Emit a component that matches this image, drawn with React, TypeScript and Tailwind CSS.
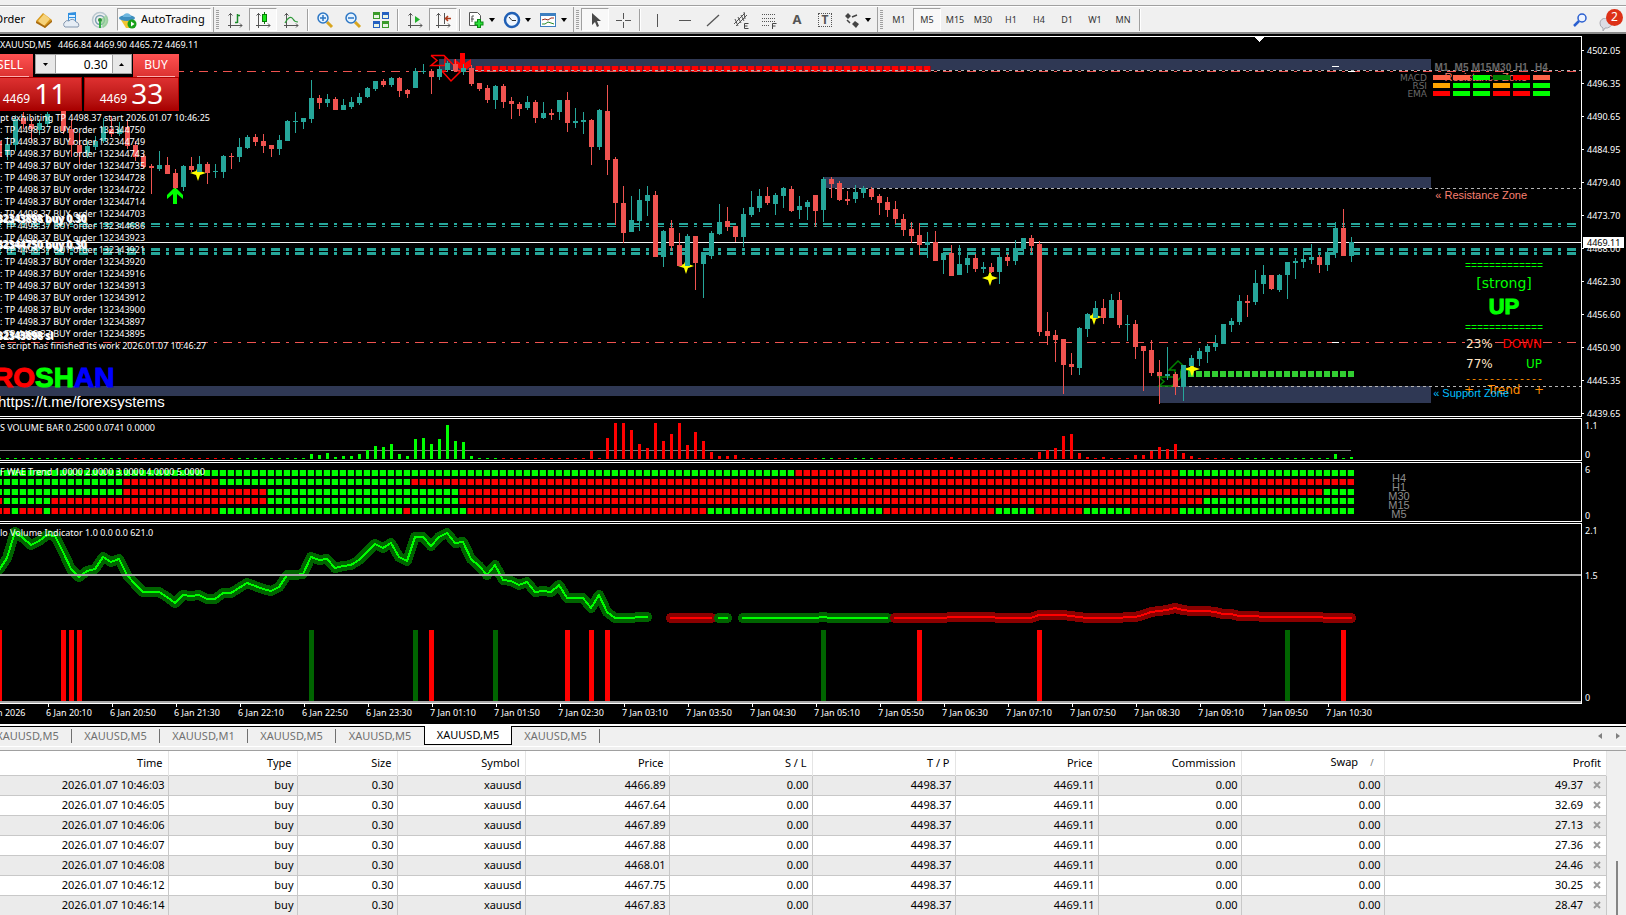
import React, { useState } from "react";

const UP = "#26a69a";
const DOWN = "#ef5350";

// one bar every 8px: colour, high, body top, body bottom, low
const CANDLES = `
r 139 141 157 160,g 137 144 155 160,g 115 119 145 151,r 112 118 124 129,r 118 124 129 141,g 119 123 130 135,
g 112 114 124 127,r 95 100 108 111,r 100 110 131 134,r 120 129 145 157,r 133 145 153 164,g 141 146 153 158,
g 136 141 147 150,g 118 127 141 143,r 116 129 134 137,g 122 129 134 136,r 121 127 146 149,r 141 145 157 161,
r 154 156 167 168,r 164 166 168 194,g 151 165 169 171,r 157 165 174 174,r 169 173 188 189,g 165 166 187 191,
r 157 166 170 172,g 156 164 172 172,r 162 164 173 184,g 164 171 172 178,g 155 156 172 178,r 153 156 157 169,
g 138 147 157 162,g 135 137 148 149,r 134 137 142 146,r 134 141 146 153,r 145 145 149 157,g 135 140 149 155,
g 120 121 141 141,g 112 121 122 133,g 118 118 122 129,g 80 98 119 123,r 95 98 103 109,g 94 99 103 107,
r 97 99 110 110,g 99 105 110 110,g 97 102 107 109,g 93 97 103 105,g 87 88 97 98,g 81 81 89 91,
r 79 81 85 87,g 77 78 85 87,r 77 78 91 97,r 89 90 94 98,g 68 71 88 88,g 64 71 72 74,
r 69 71 77 94,g 66 69 77 80,g 61 63 70 72,r 59 64 71 72,g 64 68 72 75,r 65 68 84 86,
r 83 83 89 91,r 85 88 100 103,g 85 86 100 109,r 84 86 102 108,r 97 101 104 119,r 102 104 109 116,
g 96 102 108 110,r 100 102 118 123,g 102 113 118 119,r 109 113 115 120,g 100 100 112 120,r 92 100 123 132,
g 108 121 123 128,g 112 120 122 134,r 119 120 147 165,g 109 110 147 150,r 85 111 160 175,r 157 159 203 225,
r 186 203 233 243,g 196 220 232 232,g 189 200 221 231,g 186 195 201 216,r 191 195 257 257,g 230 231 257 267,
r 220 228 246 251,r 233 245 266 266,g 234 236 266 266,r 236 236 263 290,g 252 252 264 298,g 231 233 256 259,
g 204 222 234 235,r 207 221 227 231,r 226 226 237 242,g 208 214 237 247,g 191 207 215 217,g 189 196 208 212,
r 187 196 203 205,g 193 195 204 215,g 187 188 196 208,r 186 189 211 212,g 196 206 210 219,g 200 202 207 220,
r 195 195 211 227,g 177 179 210 222,r 177 179 184 198,r 181 183 200 201,r 191 199 201 205,g 185 192 199 203,
g 186 188 193 198,r 187 189 197 200,r 194 196 203 215,r 197 202 210 217,r 201 209 219 224,r 214 219 230 236,
r 222 229 236 243,r 223 235 245 255,g 232 242 245 258,r 231 242 261 261,g 253 253 260 274,r 245 253 276 276,
g 245 264 275 275,g 254 258 265 273,r 254 258 269 272,g 262 267 269 273,r 263 267 272 273,g 255 257 272 284,
r 254 257 261 266,g 240 248 261 265,g 238 238 249 254,r 235 238 246 253,r 241 244 332 336,r 312 331 336 345,
r 330 335 340 362,r 339 339 365 394,r 353 364 367 375,g 327 328 368 375,g 313 314 329 337,g 301 308 318 318,
r 299 308 318 324,g 294 300 318 318,r 292 300 325 328,g 315 324 325 341,r 320 324 347 359,r 346 346 351 391,
r 340 350 373 376,r 360 372 376 404,g 347 374 376 380,r 372 374 387 395,g 365 365 387 401,g 355 358 366 366,
g 348 351 359 366,g 344 346 352 363,g 335 343 347 351,g 324 324 344 344,g 318 321 325 332,g 295 301 322 325,
r 295 301 303 317,g 270 283 302 305,g 265 275 284 294,r 275 275 289 290,g 274 275 290 292,g 262 262 275 299,
g 258 261 263 279,g 250 259 262 268,g 244 257 260 264,r 255 257 265 273,g 248 252 265 271,g 222 228 253 258,
r 209 228 256 256,g 237 242 256 262`
  .split(",")
  .map((c) => c.trim().split(" "));

const LAST = 168;
const barX = (k: number) => 8 * k + 7;
const range = (from: number, to: number) =>
  Array.from({ length: to - from + 1 }, (_, i) => from + i);

const STARS = [
  [198, 173],
  [686, 266],
  [990, 278],
  [1094, 317],
  [1192, 369],
];

// tall volume bars, everything else is a 1px stub
const VOLUME: Record<number, number> = {
  38: 5, 39: 4, 40: 6, 41: 2, 42: 3, 43: 3, 44: 5, 45: 9, 46: 13, 47: 12, 48: 15, 49: 5, 50: 3,
  51: 20, 52: 21, 53: 15, 54: 20, 55: 34, 56: 18, 57: 17, 58: 3, 73: 8, 75: 21, 76: 36, 77: 36,
  78: 29, 79: 15, 80: 11, 81: 36, 82: 18, 83: 25, 84: 36, 85: 14, 86: 27, 87: 18, 88: 7, 89: 3,
  90: 3, 91: 4, 118: 2, 129: 7, 130: 9, 131: 11, 132: 23, 133: 25, 134: 6, 135: 2, 137: 2, 141: 4,
  142: 4, 143: 8, 144: 12, 145: 10, 146: 15, 147: 6, 148: 3, 166: 5, 168: 2,
};

// bar index at which the colour flips
const VOLUME_FLIPS = [9, 10, 15, 29, 62, 102, 104, 106, 109, 154];

const TREND_ROWS = [
  { y: 470, start: "g", flips: [99, 147] },
  { y: 479, start: "g", flips: [15, 27, 51] },
  { y: 489, start: "g", flips: [15, 33, 57, 165] },
  { y: 498, start: "r", flips: [0, 6, 33, 57, 150] },
  { y: 508, start: "r", flips: [1, 2, 5, 6, 27, 50, 51, 58, 88, 110, 124, 129, 135, 141, 147] },
];

const isGreen = (k: number, start: string, flips: number[]) =>
  (start === "g") === (flips.filter((f) => f <= k).length % 2 === 0);

const WAVES = [
  {
    green: true,
    from: -1,
    ys: [
      570, 558, 532, 538, 545, 541, 535, 536, 552, 569, 577, 571, 569, 557, 562, 559, 575, 584, 592,
      592, 592, 597, 603, 595, 596, 595, 599, 599, 593, 593, 588, 583, 586, 589, 591, 587, 575, 575,
      574, 557, 560, 559, 568, 566, 565, 560, 552, 544, 548, 543, 557, 561, 537, 537, 546, 537, 533,
      543, 542, 559, 566, 575, 565, 580, 581, 585, 582, 592, 591, 592, 585, 598, 598, 598, 608, 595,
      612, 618, 618, 618, 617, 617,
    ],
  },
  { green: false, from: 83, ys: [618, 618, 618, 618, 618, 618] },
  { green: true, from: 89, ys: [618, 618] },
  {
    green: true,
    from: 92,
    ys: [618, 618, 618, 618, 618, 618, 618, 618, 618, 618, 617, 618, 618, 618, 618, 618, 618, 618, 618],
  },
  {
    green: false,
    from: 111,
    ys: [
      618, 618, 618, 618, 618, 618, 618, 617, 617, 617, 617, 617, 617, 618, 618, 618, 618, 618, 615,
      615, 615, 615, 616, 617, 618, 618, 618, 618, 618, 617, 617, 615, 612, 611, 610, 608, 610, 611,
      611, 611, 612, 614, 614, 616, 616, 616, 617, 617, 617, 617, 617, 617, 617, 617, 618, 618, 618,
      618,
    ],
  },
];

const SIGNALS = [
  { color: "#ff0000", bars: [-1, 7, 8, 9, 53, 70, 73, 75, 114, 129, 167] },
  { color: "#006400", bars: [38, 51, 61, 102, 160] },
];

const PRICES = [
  "4502.05", "4496.35", "4490.65", "4484.95", "4479.40", "4473.70",
  "4468.00", "4462.30", "4456.60", "4450.90", "4445.35", "4439.65",
];

const TIMES = [
  "6 Jan 2026", "6 Jan 20:10", "6 Jan 20:50", "6 Jan 21:30", "6 Jan 22:10", "6 Jan 22:50",
  "6 Jan 23:30", "7 Jan 01:10", "7 Jan 01:50", "7 Jan 02:30", "7 Jan 03:10", "7 Jan 03:50",
  "7 Jan 04:30", "7 Jan 05:10", "7 Jan 05:50", "7 Jan 06:30", "7 Jan 07:10", "7 Jan 07:50",
  "7 Jan 08:30", "7 Jan 09:10", "7 Jan 09:50", "7 Jan 10:30",
];

const MODIFIED = [
  132344750, 132344749, 132344743, 132344735, 132344728, 132344722, 132344714, 132344703, 132344686,
  132343923, 132343921, 132343920, 132343916, 132343913, 132343912, 132343900, 132343897, 132343895,
];

const FRAMES = ["M1", "M5", "M15", "M30", "H1", "H4"];
const SIGNAL_GRID = [
  ["bg-[#ff6347]", "bg-[#ff6347]", "bg-[#00ff00]", "bg-[#008000]", "bg-[#ff0000]", "bg-[#ff6347]"],
  ["bg-[#ffa500]", "bg-[#00ff00]", "bg-[#00ff00]", "bg-[#ffa500]", "bg-[#00ff00]", "bg-[#00ff00]"],
  ["bg-[#ff0000]", "bg-[#00ff00]", "bg-[#00ff00]", "bg-[#ff0000]", "bg-[#ff0000]", "bg-[#00ff00]"],
];

const TABS = ["XAUUSD,M5", "XAUUSD,M5", "XAUUSD,M1", "XAUUSD,M5", "XAUUSD,M5", "XAUUSD,M5", "XAUUSD,M5"];

const ORDERS = [
  ["03", "4466.89", "49.37"],
  ["05", "4467.64", "32.69"],
  ["06", "4467.89", "27.13"],
  ["07", "4467.88", "27.36"],
  ["08", "4468.01", "24.46"],
  ["12", "4467.75", "30.25"],
  ["14", "4467.83", "28.47"],
];

const Icon = ({ children }: { children: React.ReactNode }) => (
  <svg width="18" height="18" viewBox="0 0 18 18" fill="none">
    {children}
  </svg>
);

const Axes = () => (
  <path d="M4.5 2v15M2 14.5h14M2.5 4.5l2-2 2 2M14 12.5l2 2-2 2" stroke="#555" />
);

const icons = {
  book: (
    <Icon>
      <path d="M1 10L8 2l9 7-7 8z" fill="#d99a1c" />
      <path d="M3 10l6-7 6 5-6 7z" fill="#f6d27a" />
      <path d="M1 10l9 5 7-6v2l-7 6-9-5z" fill="#a86a10" />
    </Icon>
  ),
  market: (
    <Icon>
      <path d="M5 2l8-1v10H5z" fill="#2f8fe0" />
      <path d="M6 4h6v2H6zM6 7h6v2H6z" fill="#d9efff" />
      <path d="M2 16a3 3 0 010-5 3 3 0 014-1 4 4 0 017 1 3 3 0 012 5z" fill="#e6edf5" stroke="#8496ad" />
    </Icon>
  ),
  signal: (
    <Icon>
      <circle cx="9" cy="9" r="7.5" stroke="#b9c7cf" strokeWidth="1.5" />
      <circle cx="9" cy="9" r="4.5" stroke="#7fa3b5" strokeWidth="1.5" />
      <path d="M9 9l6-5a8 8 0 01-3 13z" fill="#8fd08f" opacity=".7" />
      <circle cx="9" cy="9" r="2" fill="#2b8f3a" />
      <path d="M9 10v7" stroke="#2fae3f" strokeWidth="2" />
    </Icon>
  ),
  auto: (
    <Icon>
      <path d="M2 9h12l-4 8H7z" fill="#f3c530" />
      <ellipse cx="8" cy="7" rx="8" ry="3" fill="#3f8fc0" />
      <path d="M4 6c0-5 8-5 8 0z" fill="#6db6df" />
      <circle cx="13" cy="13" r="4.5" fill="#18a018" />
      <path d="M12 10.500v5l3.500-2.500z" fill="#fff" />
    </Icon>
  ),
  bars: (
    <Icon>
      <Axes />
      <path d="M11.500 3v9M9 11.500h2.500M11.500 4.500H14" stroke="#1a8a2a" strokeWidth="1.500" />
    </Icon>
  ),
  candles: (
    <Icon>
      <Axes />
      <path d="M10.500 1v12" stroke="#0a7a0a" />
      <rect x="8.500" y="3.500" width="4" height="7" fill="#19e619" stroke="#0a7a0a" />
    </Icon>
  ),
  line: (
    <Icon>
      <Axes />
      <path d="M3 12c3-6 6-7 8-4 1 2 3 3 5 3" stroke="#2f9a3a" strokeWidth="1.200" />
    </Icon>
  ),
  zoomIn: (
    <Icon>
      <path d="M11 11l5 5" stroke="#d8a520" strokeWidth="3" />
      <circle cx="7" cy="7" r="5" fill="#e3f2ff" stroke="#2c76c4" strokeWidth="1.500" />
      <path d="M4 7h6M7 4v6" stroke="#2c76c4" strokeWidth="1.500" />
    </Icon>
  ),
  zoomOut: (
    <Icon>
      <path d="M11 11l5 5" stroke="#d8a520" strokeWidth="3" />
      <circle cx="7" cy="7" r="5" fill="#e3f2ff" stroke="#2c76c4" strokeWidth="1.500" />
      <path d="M4 7h6" stroke="#2c76c4" strokeWidth="1.500" />
    </Icon>
  ),
  tile: (
    <Icon>
      <path d="M1 1h7v7H1zM10 10h7v7h-7z" fill="#3a9a2a" />
      <path d="M10 1h7v7h-7zM1 10h7v7H1z" fill="#2460c0" />
      <path d="M2 4h5v3H2zM11 4h5v3h-5zM2 13h5v3H2zM11 13h5v3h-5z" fill="#e8f4e4" />
    </Icon>
  ),
  scroll: (
    <Icon>
      <Axes />
      <path d="M9 5v7l5-3.500z" fill="#22b02c" />
    </Icon>
  ),
  shift: (
    <Icon>
      <Axes />
      <path d="M10.500 2v11" stroke="#555" />
      <path d="M17 7.500h-5M14 5l-2.500 2.500L14 10" stroke="#b03a1a" strokeWidth="1.500" />
    </Icon>
  ),
  indicator: (
    <Icon>
      <path d="M2.500 1.500h8l3 3v10h-11z" fill="#fff" stroke="#555" />
      <path d="M5 11V5h2M4 8h3" stroke="#555" />
      <path d="M12 8v9M7.500 12.500h9" stroke="#0a8a12" strokeWidth="4" />
      <path d="M12 9v7M8.500 12.500h7" stroke="#2be03a" strokeWidth="2" />
    </Icon>
  ),
  clock: (
    <Icon>
      <circle cx="9" cy="9" r="7" fill="#eef6ff" stroke="#1f5fb5" strokeWidth="2.500" />
      <path d="M6 6l3 3.500h4" stroke="#333" />
    </Icon>
  ),
  template: (
    <Icon>
      <rect x="1.500" y="2.500" width="15" height="13" fill="#fff" stroke="#3d7fc0" />
      <path d="M1 2h16v3H1z" fill="#3d7fc0" />
      <path d="M3 9l3-1 3 1 3-2h3" stroke="#9a2a1a" />
      <path d="M3 13h3l3-2 3 1 3 1" stroke="#2a8a2a" />
    </Icon>
  ),
  cursor: (
    <Icon>
      <path d="M6 2v12l3-3 2 5 2-1-2-5h4z" fill="#4a4a4a" />
    </Icon>
  ),
  cross: (
    <Icon>
      <path d="M9.500 2v6M9.500 11v6M2 9.500h6M11 9.500h6" stroke="#555" />
    </Icon>
  ),
  vline: (
    <Icon>
      <path d="M9.500 3v13" stroke="#555" />
    </Icon>
  ),
  hline: (
    <Icon>
      <path d="M3 9.500h12" stroke="#555" />
    </Icon>
  ),
  trend: (
    <Icon>
      <path d="M3 15L15 4" stroke="#555" strokeWidth="1.300" />
    </Icon>
  ),
  channel: (
    <Icon>
      <path d="M2 13L13 2M4 15L15 4M3 8l3 7M6 6l3 6M9 4l3 6M12 1l1 7" stroke="#555" />
      <path d="M16.500 12.500h-4v5h4M12.500 15h3" stroke="#444" />
    </Icon>
  ),
  fibo: (
    <Icon>
      <path d="M2 3.500h13M2 7.500h13M2 10.500h13M2 14.500h8" stroke="#555" strokeDasharray="1 1" />
      <path d="M16.500 12.500h-4V18M12.500 15h3" stroke="#444" />
    </Icon>
  ),
  shapes: (
    <Icon>
      <path d="M2 5l3-3 3 3-3 3zM9 13l3-3 4 3-3 4z" fill="#444" />
      <path d="M4 9l3 3M9 6l5-2" stroke="#444" strokeWidth="1.500" />
    </Icon>
  ),
};

const Tool = ({ label, pressed, menu, children }: any) => (
  <button
    aria-label={label}
    className={`flex h-[23px] shrink-0 items-center ${menu ? "w-[36px] gap-1 pl-1" : "w-[28px] justify-center"} ${
      pressed ? "border border-t-[#a0a0a0] border-l-[#a0a0a0] border-r-white border-b-white bg-[#f8f8f8]" : ""
    }`}
  >
    {children}
    {menu && (
      <svg width="6" height="4" className="shrink-0">
        <path d="M0 0h6L3 4z" fill="#000" />
      </svg>
    )}
  </button>
);

const Divider = () => <span className="mx-[2px] h-[22px] w-[2px] shrink-0 border-l border-[#a0a0a0] bg-white" />;

const Grip = () => (
  <span className="flex w-[10px] shrink-0 items-center gap-[2px] pl-[2px]">
    <span className="h-[25px] w-px bg-[#a0a0a0]" />
    <svg width="3" height="20">
      <path d="M1.500 0v20" stroke="#a0a0a0" strokeWidth="3" strokeDasharray="1 1" />
    </svg>
  </span>
);

const Toolbar = ({ frame, setFrame }: { frame: string; setFrame: (f: string) => void }) => (
  <header className="h-[34px] bg-[#f0f0f0] text-[11px] text-black">
    <div className="h-[6px] border-b border-[#a0a0a0]" />
    <div className="flex h-[28px] items-center border-t border-b-2 border-t-white border-b-[#8a8a8a]">
      <button className="flex w-[30px] shrink-0 justify-end pr-[5px] whitespace-nowrap">New Order</button>
      <Tool label="Market watch">{icons.book}</Tool>
      <Tool label="Market">{icons.market}</Tool>
      <Tool label="Signals">{icons.signal}</Tool>
      <button className="ml-[3px] flex h-[23px] w-[94px] shrink-0 items-center gap-1 border border-t-[#a0a0a0] border-r-white border-b-white border-l-[#a0a0a0] bg-[#f8f8f8] pl-px">
        {icons.auto}
        AutoTrading
      </button>
      <Grip />
      <Tool label="Bar chart">{icons.bars}</Tool>
      <Tool label="Candlesticks" pressed>{icons.candles}</Tool>
      <Tool label="Line chart">{icons.line}</Tool>
      <Divider />
      <Tool label="Zoom in">{icons.zoomIn}</Tool>
      <Tool label="Zoom out">{icons.zoomOut}</Tool>
      <Tool label="Tile windows">{icons.tile}</Tool>
      <Divider />
      <Tool label="Auto scroll">{icons.scroll}</Tool>
      <Tool label="Chart shift" pressed>{icons.shift}</Tool>
      <Divider />
      <Tool label="Indicators" menu>{icons.indicator}</Tool>
      <Tool label="Periods" menu>{icons.clock}</Tool>
      <Tool label="Templates" menu>{icons.template}</Tool>
      <Grip />
      <Tool label="Cursor" pressed>{icons.cursor}</Tool>
      <Tool label="Crosshair">{icons.cross}</Tool>
      <Divider />
      <Tool label="Vertical line">{icons.vline}</Tool>
      <Tool label="Horizontal line">{icons.hline}</Tool>
      <Tool label="Trendline">{icons.trend}</Tool>
      <Tool label="Channel">{icons.channel}</Tool>
      <Tool label="Fibonacci">{icons.fibo}</Tool>
      <Tool label="Text">
        <span className="text-[13px] font-bold text-[#555]">A</span>
      </Tool>
      <Tool label="Text label">
        <span className="flex h-[14px] w-[14px] items-center justify-center border border-dotted border-[#555] text-[12px] font-bold text-[#555]">
          T
        </span>
      </Tool>
      <Tool label="Arrows" menu>{icons.shapes}</Tool>
      <Grip />
      {["M1", "M5", "M15", "M30", "H1", "H4", "D1", "W1", "MN"].map((f) => (
        <button
          key={f}
          onClick={() => setFrame(f)}
          className={`h-[23px] w-[28px] shrink-0 text-[9px] text-[#333] ${
            f === frame ? "border border-t-[#a0a0a0] border-r-white border-b-white border-l-[#a0a0a0] bg-[#f8f8f8]" : ""
          }`}
        >
          {f}
        </button>
      ))}
      <Divider />
      <div className="ml-auto flex items-center gap-3 pr-[3px]">
        <button aria-label="Search">
          <svg width="14" height="14" fill="none">
            <path d="M6 8l-5 5" stroke="#2a5fd0" strokeWidth="2.500" />
            <circle cx="9" cy="5" r="4" fill="#eef4ff" stroke="#2a5fd0" strokeWidth="1.500" />
          </svg>
        </button>
        <button aria-label="Notifications" className="relative h-[22px] w-[24px]">
          <svg width="16" height="14" className="mt-[9px]">
            <path d="M1 5a6 5 0 0112 0 6 5 0 01-7 5l-2 3v-3a5 5 0 01-3-5z" fill="#dcdce4" stroke="#a8a8b0" />
          </svg>
          <span className="absolute top-0 right-0 flex h-[17px] w-[17px] items-center justify-center rounded-full bg-[#dd3118] text-[12px] text-white">
            2
          </span>
        </button>
      </div>
    </div>
  </header>
);

const Pane = ({ size, axis, children }: { size: string; axis: React.ReactNode; children: React.ReactNode }) => (
  <section className={`flex ${size}`}>
    <div className="relative min-w-0 flex-1 overflow-hidden border-y border-r border-[#ffffff]">{children}</div>
    {axis}
  </section>
);

const Plot = ({ top, children }: { top: string; children: React.ReactNode }) => (
  <svg className="block h-full w-full" shapeRendering="crispEdges">
    <g transform={top}>{children}</g>
  </svg>
);

const PriceChart = () => (
  <Plot top="translate(0 -37)">
    <g fill="#2f3854">
      <rect x="439" y="59" width="992" height="11" />
      <rect x="823" y="177" width="608" height="11" />
      <rect x="0" y="386" width="1160" height="10" />
      <rect x="1160" y="386" width="271" height="17" />
    </g>
    <g stroke={UP} strokeDasharray="9 6 3 6">
      <line x1="-17" x2="1576" y1="224" y2="224" strokeWidth="2" />
      <line x1="-17" x2="1576" y1="226.500" y2="226.500" />
      <line x1="-17" x2="1576" y1="249.500" y2="249.500" strokeWidth="3" />
      <line x1="-17" x2="1576" y1="253.500" y2="253.500" strokeWidth="3" />
    </g>
    {range(59, 115).map((k) => (
      <g key={k}>
        <rect x={barX(k) - 4} y="66" width="8" height="6" fill="#8b1020" />
        <rect x={barX(k) - 3} y="66" width="6" height="6" fill="#ff0000" />
      </g>
    ))}
    {range(147, LAST).map((k) => (
      <rect key={k} x={barX(k) - 3} y="371" width="6" height="6" fill="#32cd32" />
    ))}
    <g stroke={DOWN} strokeDasharray="9 6 3 6">
      <line x1="-17" x2="1576" y1="71.500" y2="71.500" />
      <line x1="-17" x2="1576" y1="342.500" y2="342.500" />
    </g>
    <g stroke="#b4b4b4" strokeDasharray="3 3">
      <line x1="451" x2="100%" y1="70.500" y2="70.500" />
      <line x1="829" x2="100%" y1="188.500" y2="188.500" />
      <line x1="1159" x2="100%" y1="386.500" y2="386.500" />
    </g>
    <line x1="0" x2="100%" y1="242.500" y2="242.500" stroke="#f4f4f4" />
    <g stroke="#fff">
      <line x1="1332" x2="1339" y1="66.500" y2="66.500" />
      <line x1="1348" x2="1355" y1="71.500" y2="71.500" />
      <line x1="1332" x2="1339" y1="342.500" y2="342.500" />
    </g>
    <path d="M1254 37h10l-5 5z" fill="#fff" />
    <g fill="none" strokeWidth="1.500" shapeRendering="auto">
      <path
        d="M431 55.500h13l11 11M431 55.500l6 5-6 5h14v-8M442 71l9 10 10-10h-4M442 71h4"
        stroke="#ff0000"
      />
      <path
        d="M1178 361l-9 9h6v7h-16l5 4.500-5 4.500h13l9-9v-7h7z"
        stroke="#008000"
      />
    </g>
    <path d="M460 53h5v10l6-4v7l-8 6-9-8v-5l6 4z" fill="#ff0000" shapeRendering="auto" />
    <path d="M175 187l8 8v4l-6-5v10h-4v-10l-6 5v-4z" fill="#00ff00" shapeRendering="auto" />
    {STARS.map(([x, y]) => (
      <path
        key={x}
        transform={`translate(${x} ${y})`}
        d="M0-7l2 5 6 2-6 2-2 6-2-6-6-2 6-2z"
        fill="#ffff00"
        shapeRendering="auto"
      />
    ))}
    {CANDLES.map(([side, high, top, bottom, low], i) => {
      const x = barX(i - 1);
      return (
        <g key={i} fill={side === "g" ? UP : DOWN}>
          <rect x={x} y={+high} width="1" height={+low - +high} />
          <rect x={x - 2} y={+top} width="5" height={+bottom - +top} />
        </g>
      );
    })}
  </Plot>
);

const QuoteButton = ({ big }: { big: string }) => (
  <button className="flex h-[34px] w-[95px] items-end justify-center gap-1 border border-[#b00000] bg-linear-to-b from-[#de3030] to-[#a80000] pb-[4px] text-[12px] leading-[14px] text-white">
    4469
    <span className="text-[28px] leading-[26px]">{big}</span>
  </button>
);

const OneClick = () => (
  <div className="absolute top-[17px] left-0 -ml-[13px] w-[192px] bg-black text-[12px] text-white">
    <div className="flex justify-between">
      <button className="h-[23px] w-[46px] bg-linear-to-b from-[#ff5252] to-[#dc3030] px-[4px]">
        <span className="block h-[22px] border-b border-[#ffb0b0] leading-[20px]">SELL</span>
      </button>
      <div className="flex h-[20px] w-[97px] border border-[#a0a0a0] bg-[#e8e8e8]">
        <button aria-label="Decrease volume" className="flex w-[19px] items-center justify-center">
          <svg width="5" height="3"><path d="M0 0h5L2.500 3z" /></svg>
        </button>
        <input
          aria-label="Volume"
          defaultValue="0.30"
          className="w-[58px] border-x border-[#a0a0a0] bg-white pr-1 text-right text-[12px] text-black outline-none"
        />
        <button aria-label="Increase volume" className="flex flex-1 items-center justify-center">
          <svg width="5" height="3"><path d="M0 3h5L2.500 0z" /></svg>
        </button>
      </div>
      <button className="h-[23px] w-[46px] bg-linear-to-b from-[#ff5252] to-[#dc3030] px-[4px]">
        <span className="block h-[22px] border-b border-[#ffb0b0] leading-[20px]">BUY</span>
      </button>
    </div>
    <div className="flex justify-between">
      <QuoteButton big="11" />
      <QuoteButton big="33" />
    </div>
  </div>
);

const OrderTag = ({ place, children }: { place: string; children: string }) => (
  <p className={`absolute -left-[9px] text-[10px] font-bold whitespace-nowrap text-white [text-shadow:1px_1px_0_#fff] ${place}`}>
    {children}
  </p>
);

const SignalGrid = () => (
  <div className="absolute top-[25px] right-[31px] flex items-end gap-[6px]">
    <div className="text-right font-['DejaVu_Sans'] text-[9px] leading-[8px] text-[#696969]">
      <p>MACD</p>
      <p>RSI</p>
      <p>EMA</p>
    </div>
    <div className="w-[117px]">
      <div className="grid grid-cols-6 gap-[3px] pb-px text-center font-['Liberation_Sans'] text-[10px] leading-[12px] font-bold text-[#696969]">
        {FRAMES.map((f) => (
          <span key={f} className="flex justify-center">{f}</span>
        ))}
      </div>
      <div className="grid grid-cols-6 gap-[3px] pb-[2px]">
        {SIGNAL_GRID.flat().map((c, i) => (
          <span key={i} className={`h-[5px] ${c}`} />
        ))}
      </div>
    </div>
  </div>
);

const TrendBox = () => (
  <div className="absolute top-[218px] right-[37px] w-[80px] text-center font-['DejaVu_Sans'] text-[12px] leading-[20px] text-[#00ff00]">
    <p className="h-[18px] font-['Liberation_Mono'] text-[10px] leading-[24px]">=============</p>
    <p className="text-[14px]">[strong]</p>
    <p className="h-[27px] font-['Liberation_Sans'] text-[22px] leading-[27px] font-bold [-webkit-text-stroke:1px_#00ff00]">
      UP
    </p>
    <p className="h-[14px] font-['Liberation_Mono'] text-[10px] leading-[18px]">=============</p>
    <p className="flex justify-between px-[2px]">
      <span className="text-[#ffe4c4]">23%</span>
      <span className="text-[#ff0000]">DOWN</span>
    </p>
    <p className="flex justify-between px-[2px]">
      <span className="text-[#ffe4c4]">77%</span>
      <span>UP</span>
    </p>
    <p className="font-['Liberation_Mono'] text-[10px] leading-[12px] text-[#ff8c00]">-------------</p>
    <p className="flex justify-between leading-[8px] text-[#ff8c00]">
      <span>+</span>
      <span>Trend</span>
      <span>+</span>
    </p>
  </div>
);

const ZoneLabel = ({ place, children }: { place: string; children: string }) => (
  <p className={`absolute font-['Liberation_Sans'] text-[11px] leading-[14px] whitespace-nowrap ${place}`}>« {children}</p>
);

const Scale = ({ values }: { values: string[] }) => (
  <div className="flex w-[44px] shrink-0 flex-col justify-between pt-[2px] pl-[3px] leading-[12px]">
    {values.map((v) => (
      <span key={v}>{v}</span>
    ))}
  </div>
);

const Charts = () => (
  <main className="flex flex-col gap-px bg-black pt-[2px] text-[9px] leading-[12px] text-white">
    <Pane
      size="h-[381px]"
      axis={
        <div className="relative -mt-[2px] w-[44px] shrink-0">
          {PRICES.map((p) => (
            <div key={p} className="flex h-[33px] items-center gap-[3px]">
              <span className="h-px w-[2px] bg-white" />
              {p}
            </div>
          ))}
          <span className="absolute top-[203px] left-px h-[11px] w-[41px] bg-white pl-1 leading-[11px] text-black">
            4469.11
          </span>
        </div>
      }
    >
      <PriceChart />
      <p className="absolute top-[2px] left-0 whitespace-pre">XAUUSD,M5   4466.84 4469.90 4465.72 4469.11</p>
      <div className="absolute top-[75px] left-0 whitespace-nowrap">
        <p>pt exhibiting TP 4498.37 start 2026.01.07 10:46:25</p>
        {MODIFIED.map((id) => (
          <p key={id}>: TP 4498.37 BUY order {id}</p>
        ))}
        <p>e script has finished its work 2026.01.07 10:46:27</p>
      </div>
      <OrderTag place="top-[175px]">132343898 buy 0.30</OrderTag>
      <OrderTag place="top-[201px]">132344750 buy 0.30</OrderTag>
      <OrderTag place="top-[292px]">132343898 sl</OrderTag>
      <OneClick />
      <div className="absolute top-[327px] left-0 font-['Liberation_Sans'] whitespace-nowrap">
        <p className="-ml-[7px] text-[28px] leading-[28px] font-bold">
          <span className="text-[#ff0000] [-webkit-text-stroke:1px_#ff0000]">RO</span>
          <span className="text-[#00ff00] [-webkit-text-stroke:1px_#00ff00]">SH</span>
          <span className="text-[#0000ff] [-webkit-text-stroke:1px_#0000ff]">AN</span>
        </p>
        <p className="-ml-[2px] text-[15px] leading-[20px]">https://t.me/forexsystems</p>
      </div>
      <ZoneLabel place="top-[33px] right-[54px] text-[#fa8072]">Resistance Zone</ZoneLabel>
      <ZoneLabel place="top-[151px] right-[54px] text-[#fa8072]">Resistance Zone</ZoneLabel>
      <SignalGrid />
      <TrendBox />
      <ZoneLabel place="top-[349px] right-[72px] text-[#00bfff]">Support Zone</ZoneLabel>
    </Pane>

    <Pane size="h-[43px]" axis={<Scale values={["1.1", "0"]} />}>
      <Plot top="translate(0 -419)">
        <line x1="0" x2="1351" y1="450.500" y2="450.500" stroke="#808080" />
        {range(-1, LAST).map((k) => {
          const h = VOLUME[k] ?? 1;
          return (
            <rect
              key={k}
              x={barX(k) - 1}
              y={459 - h}
              width="3"
              height={h}
              fill={isGreen(k, "g", VOLUME_FLIPS) ? "#00ff00" : "#ff0000"}
            />
          );
        })}
      </Plot>
      <p className="absolute top-[3px] left-0">S VOLUME BAR 0.2500 0.0741 0.0000</p>
    </Pane>

    <Pane size="h-[60px]" axis={<Scale values={["6", "0"]} />}>
      <Plot top="translate(0 -463)">
        {TREND_ROWS.map((row) =>
          range(-1, LAST).map((k) => {
            const green = isGreen(k, row.start, row.flips);
            return (
              <g key={`${row.y}-${k}`}>
                <rect x={barX(k) - 4} y={row.y} width="7" height="6" fill={green ? "#003c00" : "#780000"} />
                <rect x={barX(k) - 3} y={row.y} width="6" height="6" fill={green ? "#00ff00" : "#ff0000"} />
              </g>
            );
          })
        )}
      </Plot>
      <p className="absolute top-[3px] left-0">F WAE Trend 1.0000 2.0000 3.0000 4.0000 5.0000</p>
      <div className="absolute top-[11px] right-[171px] flex w-[22px] flex-col items-center font-['Liberation_Sans'] text-[11px] leading-[9px] text-[#8c8c8c]">
        {["H4", "H1", "M30", "M15", "M5"].map((f) => (
          <span key={f}>{f}</span>
        ))}
      </div>
    </Pane>

    <Pane
      size="h-[181px]"
      axis={
        <div className="flex w-[44px] shrink-0 flex-col pt-[2px] pl-[3px]">
          <span>2.1</span>
          <span className="mt-[33px]">1.5</span>
          <span className="mt-auto">0</span>
        </div>
      }
    >
      <Plot top="translate(0 -524)">
        {WAVES.map((w) => {
          const points = w.ys.map((y, i) => `${barX(w.from + i)},${y}`).join(" ");
          return (
            <g key={w.from} fill="none" strokeLinejoin="round" strokeLinecap="round">
              <polyline points={points} stroke={w.green ? "#006400" : "#8b0000"} strokeWidth="10" />
              <polyline points={points} stroke={w.green ? "#00ff00" : "#ff0000"} strokeWidth="2" />
            </g>
          );
        })}
        {SIGNALS.map((s) =>
          s.bars.map((k) => <rect key={k} x={barX(k) - 2} y="630" width="5" height="71" fill={s.color} />)
        )}
        <rect x="0" y="574" width="100%" height="2" fill="#a9a9a9" />
        <rect x="0" y="701" width="100%" height="2" fill="#a9a9a9" />
      </Plot>
      <p className="absolute top-[3px] left-0">lo Volume Indicator 1.0 0.0 0.0 621.0</p>
    </Pane>

    <div className="-mt-px flex h-[20px] overflow-hidden">
      <div className="-ml-[18px] flex">
        {TIMES.map((t) => (
          <div key={t} className="w-[64px] shrink-0 whitespace-nowrap">
            <span className="ml-[2px] block h-[3px] w-px bg-white" />
            {t}
          </div>
        ))}
      </div>
    </div>
  </main>
);

const Tabs = ({ tab, setTab }: { tab: number; setTab: (i: number) => void }) => (
  <nav className="border-t-2 border-white bg-[#f0f0f0] text-[11px]">
    <div className="flex h-[20px] items-start border-t border-black">
      <div className="-ml-[16px] flex">
        {TABS.map((t, i) =>
          i === tab ? (
            <button key={i} className="-mt-px h-[19px] w-[88px] border-x border-b border-black bg-white text-black">
              {t}
            </button>
          ) : (
            <button key={i} onClick={() => setTab(i)} className="flex h-[18px] w-[88px] items-center text-[#707070]">
              <span className="flex-1">{t}</span>
              {i !== tab - 1 && <span className="h-[14px] w-px bg-[#707070]" />}
            </button>
          )
        )}
      </div>
      <div className="ml-auto flex gap-[14px] pt-[6px] pr-[6px]">
        <button aria-label="Scroll tabs left">
          <svg width="4" height="6"><path d="M4 0v6L0 3z" fill="#808080" /></svg>
        </button>
        <button aria-label="Scroll tabs right">
          <svg width="4" height="6"><path d="M0 0v6l4-3z" fill="#808080" /></svg>
        </button>
      </div>
    </div>
    <div className="h-[5px] border-t border-b border-t-white border-b-[#a0a0a0]" />
  </nav>
);

const HEADS = ["Time", "Type", "Size", "Symbol", "Price", "S / L", "T / P", "Price", "Commission", "Swap", "Profit"];

const Terminal = () => (
  <div className="flex bg-[#f0f0f0]">
    <table className="min-w-0 flex-1 table-fixed border-collapse bg-white text-right text-[11px] leading-[18px] text-black">
      <colgroup>
        <col className="w-[168px]" />
        <col className="w-[129px]" />
        <col className="w-[100px]" />
        <col className="w-[128px]" />
        <col className="w-[144px]" />
        <col className="w-[143px]" />
        <col className="w-[143px]" />
        <col className="w-[143px]" />
        <col className="w-[143px]" />
        <col className="w-[143px]" />
        <col />
      </colgroup>
      <thead>
        <tr className="h-[24px]">
          {HEADS.map((h, i) => (
            <th key={i} className="border-r border-[#e5e5e5] pr-[5px] text-right font-normal">
              {h}
              {h === "Swap" && <span className="mr-[5px] ml-[12px] text-[9px] text-[#707070]">/</span>}
            </th>
          ))}
        </tr>
      </thead>
      <tbody>
        {ORDERS.map(([sec, price, profit], i) => (
          <tr
            key={sec}
            className={`h-[20px] border-t border-[#c8c8c8] *:border-r *:border-[#c8c8c8] *:pr-[3px] ${i % 2 ? "" : "bg-[#ebebeb]"}`}
          >
            <td>2026.01.07 10:46:{sec}</td>
            <td>buy</td>
            <td>0.30</td>
            <td>xauusd</td>
            <td>{price}</td>
            <td>0.00</td>
            <td>4498.37</td>
            <td>4469.11</td>
            <td>0.00</td>
            <td>0.00</td>
            <td>
              <span className="flex items-center justify-end gap-[10px] pr-[2px]">
                {profit}
                <button aria-label="Close order">
                  <svg width="8" height="8">
                    <path d="M1 1l6 6M7 1L1 7" stroke="#9a9a9a" strokeWidth="2" />
                  </svg>
                </button>
              </span>
            </td>
          </tr>
        ))}
      </tbody>
    </table>
    <div className="flex w-[19px] shrink-0 items-end justify-center">
      <span className="h-[54px] w-[2px] bg-[#858585]" />
    </div>
  </div>
);

function App() {
  const [frame, setFrame] = useState("M5");
  const [tab, setTab] = useState(5);

  return (
    <div className="overflow-hidden bg-[#f0f0f0] font-['Noto_Sans',sans-serif]">
      <Toolbar frame={frame} setFrame={setFrame} />
      <Charts />
      <Tabs tab={tab} setTab={setTab} />
      <Terminal />
    </div>
  );
}

export default App;
